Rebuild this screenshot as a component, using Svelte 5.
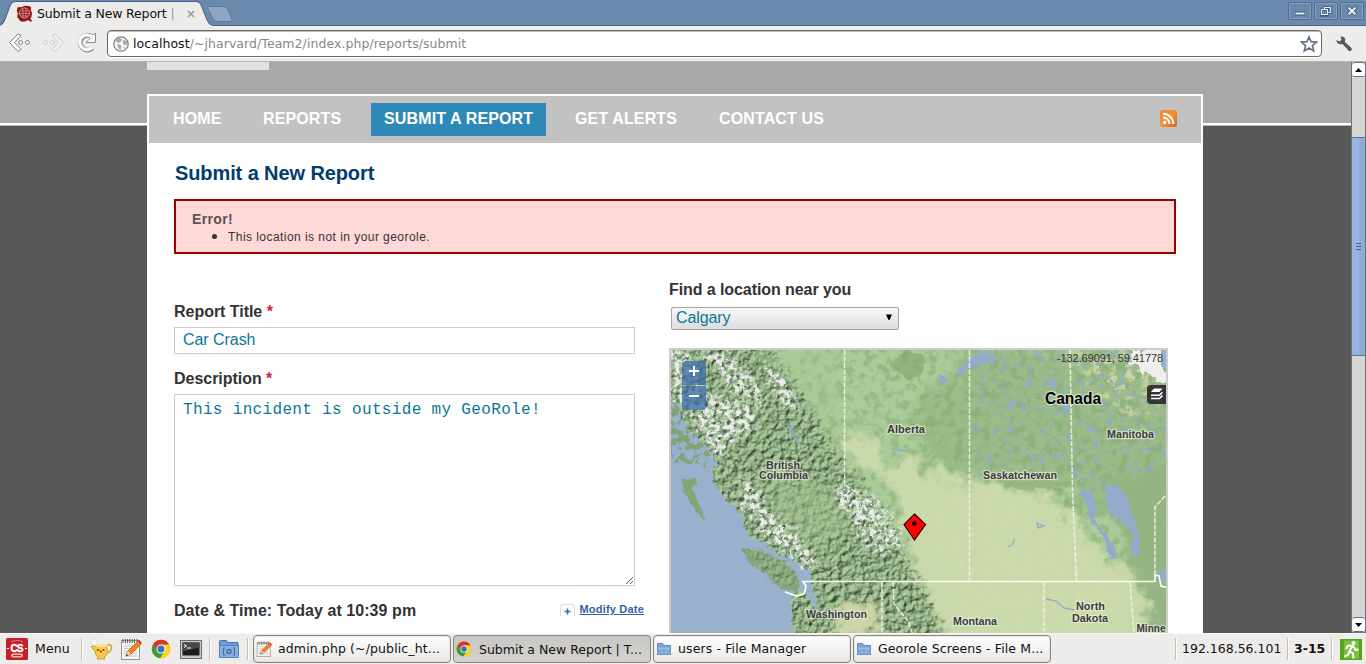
<script>
  const nav = [
    { label: 'HOME', w: 74 },
    { label: 'REPORTS', w: 105 },
    { label: 'SUBMIT A REPORT', w: 175, active: true },
    { label: 'GET ALERTS', w: 128 },
    { label: 'CONTACT US', w: 132 }
  ];
  const tasks = [
    { icon: 'note', label: 'admin.php (~/public_ht...' },
    { icon: 'chrome', label: 'Submit a New Report | T...', active: true },
    { icon: 'folder', label: 'users - File Manager' },
    { icon: 'folder', label: 'Georole Screens - File M...' }
  ];
  const labels = [
    ['Alberta', 887, 433, 38], ['British', 766, 469, 34], ['Columbia', 759, 479, 49],
    ['Manitoba', 1107, 438, 47], ['Saskatchewan', 983, 479, 74], ['Washington', 806, 618, 61],
    ['Montana', 953, 625, 44], ['North', 1076, 610, 29], ['Dakota', 1072, 621.5, 36], ['Minne', 1136.5, 632, 29]
  ];
  let title = $state('Car Crash');
  let description = $state('This incident is outside my GeoRole!');
</script>

{#snippet note(s)}
  <svg width={s} height={s} viewBox="0 0 22 22">
    <rect x="1.5" y="2.5" width="18" height="19" fill="#f4f4f2" stroke="#969692" />
    <path d="M3 1v4M5.300 1v4M7.600 1v4M9.900 1v4M12.200 1v4M14.500 1v4M17 1v4" stroke="#555" stroke-width="1" />
    <path d="M4 8h13M4 10.500h13M4 13h13M4 15.500h13M4 18h13" stroke="#bcbcbc" stroke-width=".8" />
    <path d="M6 18l2-5 10-10 3 3-10 10z" fill="#f58220" stroke="#b34d0c" stroke-width=".7" />
    <path d="M18 3l1-1 3 3-1 1z" fill="#d22" /><path d="M6 18l2-5 3 3z" fill="#f2d8a0" /><path d="M6 18l.8-2 1.200 1.200z" fill="#222" />
  </svg>
{/snippet}
{#snippet chrome(s)}
  <svg width={s} height={s} viewBox="0 0 20 20">
    <circle cx="10" cy="10" r="9.300" fill="#e8c21c" />
    <path d="M2 5.300A9.300 9.300 0 0 1 18.300 5.700H10L6 12z" fill="#d9352a" />
    <path d="M2 5.300A9.300 9.300 0 0 0 9.300 19.300L13.500 12.300 6 12z" fill="#3a9c3d" />
    <path d="M10 5.700h8.300A9.300 9.300 0 0 1 9.300 19.300L14 12z" fill="#f7d229" />
    <circle cx="10" cy="10" r="4.500" fill="#f4f6f8" /><circle cx="10" cy="10" r="3.400" fill="#2f72b8" />
  </svg>
{/snippet}
{#snippet folder(s)}
  <svg width={s} height={s} viewBox="0 0 16 16">
    <path d="M1.500 13.500v-11h5l1 2h7v9z" fill="#7aa3d6" stroke="#5f8bc2" />
    <path d="M1.500 6.500h13v7h-13z" fill="#86aedd" stroke="#6a96cd" /><path d="M2 7h12" stroke="#a9c8ec" />
  </svg>
{/snippet}

<div class="screen">
  <div class="titlebar">
    <div class="tab">
      <svg class="tabshape" width="236" height="26" viewBox="0 0 236 26">
        <path d="M0 25.500Q3.500 25 5.500 19L10 6Q11.500 2 15 2H196Q200 2 201.500 6L207 20Q209 25.500 213 25.500V26H0z" fill="#edecea" />
        <path d="M0 25Q3.500 24 5.500 18L10 6Q11.500 1.500 15 1.500H196Q200 1.500 201.500 6L207 20Q209 25 213 25.300" fill="none" stroke="#47617f" />
        <path d="M209 6.500H224Q227 6.500 228 9.500L232 19Q232.500 21.500 230 21.500H217Q214 21.500 212.500 18L208 9Q207 6.500 209 6.500z" fill="#8fa5c2" stroke="#5c789c" />
      </svg>
      <svg class="fav" width="18" height="18" viewBox="0 0 18 18">
        <path d="M2 2q3 1 6-1 4-1 7 1-1 3 1 6 0 4-2 6l2 1-1 2-3-2q-4 3-8 1l-1-2Q0 12 2 9 0 5 2 2z" fill="#8f1518" />
        <circle cx="8.500" cy="8" r="5" fill="none" stroke="#dba0a0" /><path d="M5 6h7M4 8.500h9M5 11h7M7 4v8M10 4v8" stroke="#d48e8e" stroke-width=".8" />
      </svg>
      <span class="tabtext">Submit a New Report <i>|</i></span>
      <svg class="tabx" width="8" height="8" viewBox="0 0 8 8"><path d="M1 1l6 6M7 1l-6 6" stroke="#9c9c9a" stroke-width="1.700" /></svg>
    </div>
    <div class="winbtns">
      <span><svg width="22" height="16" viewBox="0 0 22 16"><path d="M6 10.500h10" stroke="#3f5878" stroke-width="4" /><path d="M6.500 10.500h9" stroke="#e6edf5" stroke-width="2" /></svg></span>
      <span><svg width="22" height="16" viewBox="0 0 22 16"><path d="M6.500 6.500h6v6h-6zM9.500 6V4.500h6v5h-2" fill="none" stroke="#3f5878" stroke-width="2.600" /><path d="M6.500 6.500h6v5h-6zM9.500 6V4.500h6v5h-2" fill="none" stroke="#e6edf5" stroke-width="1.200" /></svg></span>
      <span><svg width="22" height="16" viewBox="0 0 22 16"><path d="M7 4l8 8M15 4l-8 8" stroke="#3f5878" stroke-width="3.600" /><path d="M7.500 4.500l7 7M14.500 4.500l-7 7" stroke="#e6edf5" stroke-width="2" /></svg></span>
    </div>
  </div>

  <div class="toolbar">
    <svg width="98" height="24" viewBox="0 0 98 24">
      <g fill="#fafaf9" stroke="#858583" stroke-width="1">
        <path d="M9.500 11.500L18 3l3.200 1.500-6.700 7 6.700 7-3.200 2z" />
        <circle cx="20.500" cy="11.500" r="2" /><circle cx="27.500" cy="11.500" r="2" />
      </g>
      <g fill="#f2f1ef" stroke="#cecdca"><path d="M63.500 11.500L55 3l-3.200 1.500 6.700 7-6.700 7 3.200 2z" /><circle cx="45.500" cy="11.500" r="2" /><circle cx="52.500" cy="11.500" r="2" /></g>
      <path d="M91.500 5.500A7.300 7.300 0 1 0 92.500 17" fill="none" stroke="#8c8c8a" stroke-width="5" />
      <path d="M95.500 2v9.500H86l3.500-3.500z" fill="#fafaf9" stroke="#8c8c8a" />
      <path d="M92 6A7.300 7.300 0 1 0 92 16.500" fill="none" stroke="#fafaf9" stroke-width="3.200" />
      <path d="M94.500 4v6.500H88l3-2.500-1-2.500z" fill="#fafaf9" />
    </svg>
    <div class="omnibox">
      <svg width="16" height="16" viewBox="0 0 16 16"><circle cx="8" cy="8" r="7.200" fill="#f6f6f6" stroke="#858585" stroke-width="1.300" /><path d="M3 3.500l3-1.500 3 1-1 2.500-2 1.500-3-1.500zM4 8l3 .500 1.500 2-1 3.500-2-1.500zM10 4l3.500 1 1 3-2 1.500-2.500-2zM10.500 11l2 .500-1.500 1.500z" fill="#a9a9a9" /></svg>
      <div class="url">localhost<span>/~jharvard/Team2/index.php/reports/submit</span></div>
      <svg width="18" height="18" viewBox="0 0 18 18"><path d="M9 1.800l2.100 4.900 5.400.400-4.100 3.500 1.300 5.300L9 13.100l-4.700 2.800 1.300-5.300L1.500 7.100l5.400-.400z" fill="#fff" stroke="#69748f" stroke-width="1.700" /></svg>
    </div>
    <svg class="wrench" width="18" height="18" viewBox="0 0 18 18"><path d="M5.500 1.500Q9.500 1 10.300 4.500L9.800 7l6.700 6q1 1.500-.500 2.800-1.300 1-2.500-.300L7.500 9Q4.500 10 2.500 8L1 5l3.500 1.500 2-1.500z" fill="#575755" /></svg>
  </div>

  <div class="view">
    <div class="page">
      <div class="stub"></div>
      <div class="container">
        <div class="nav">
          {#each nav as n}
            <a class:active={n.active} style="width:{n.w}px">{n.label}</a>
          {/each}
          <svg class="rss" width="17" height="17" viewBox="0 0 17 17">
            <defs><linearGradient id="rssg" x1="0" y1="0" x2="1" y2="1"><stop offset="0" stop-color="#ef8434" /><stop offset=".5" stop-color="#f49334" /><stop offset="1" stop-color="#dc5c22" /></linearGradient></defs>
            <rect width="17" height="17" rx="2.500" fill="url(#rssg)" /><circle cx="4.700" cy="12.500" r="1.700" fill="#fff" />
            <path d="M3 7.500a6.500 6.500 0 0 1 6.500 6.500M3 3.700A10.300 10.300 0 0 1 13.300 14" fill="none" stroke="#fff" stroke-width="2" />
          </svg>
        </div>
        <h1>Submit a New Report</h1>
        <div class="error">
          <h3>Error!</h3>
          <ul><li>This location is not in your georole.</li></ul>
        </div>
        <div class="cols">
          <div class="left">
            <h4>Report Title <b>*</b></h4>
            <input type="text" bind:value={title} />
            <h4 class="h2">Description <b>*</b></h4>
            <textarea spellcheck="false" bind:value={description}></textarea>
            <div class="daterow">
              <h4>Date &amp; Time: Today at 10:39 pm</h4>
              <span class="plus"><svg width="7" height="7" viewBox="0 0 7 7"><path d="M3.500 .5v6M.5 3.500h6" stroke="#2577a5" stroke-width="1.600" /></svg></span>
              <a>Modify Date</a>
            </div>
          </div>
          <div class="right">
            <h4>Find a location near you</h4>
            <div class="select"><span>Calgary</span><svg width="8" height="7" viewBox="0 0 8 7"><path d="M1 .5h6L4.500 6h-1z" fill="#000" /></svg></div>
            <div class="map">
              <svg width="495" height="285" viewBox="671 350 495 285" color-interpolation-filters="sRGB">
                <defs>
                  <filter id="relief" x="-5%" y="-5%" width="110%" height="110%">
                    <feTurbulence type="fractalNoise" baseFrequency=".17" numOctaves="3" seed="8" result="n" />
                    <feColorMatrix in="n" values="0 0 0 0 0  0 0 0 0 0  0 0 0 0 0  1 0 0 0 0" result="h" />
                    <feDiffuseLighting in="h" surfaceScale="2.700" diffuseConstant="1.140" lighting-color="#98b78b" result="lit"><feDistantLight azimuth="225" elevation="58" /></feDiffuseLighting>
                    <feGaussianBlur in="SourceAlpha" stdDeviation="3" result="b" />
                    <feDisplacementMap in="b" in2="n" scale="26" xChannelSelector="R" yChannelSelector="G" result="edge" />
                    <feComposite in="lit" in2="edge" operator="in" />
                  </filter>
                  <filter id="rough" x="-5%" y="-5%" width="110%" height="110%">
                    <feTurbulence type="fractalNoise" baseFrequency=".13" numOctaves="3" seed="3" />
                    <feDisplacementMap in="SourceGraphic" scale="14" xChannelSelector="R" yChannelSelector="G" />
                  </filter>
                  <filter id="nick" x="-10%" y="-10%" width="120%" height="120%">
                    <feTurbulence type="fractalNoise" baseFrequency=".2" numOctaves="3" seed="9" />
                    <feDisplacementMap in="SourceGraphic" scale="6" xChannelSelector="R" yChannelSelector="G" />
                  </filter>
                  <filter id="softrough" x="-10%" y="-10%" width="120%" height="120%">
                    <feTurbulence type="fractalNoise" baseFrequency=".06" numOctaves="4" seed="5" result="n" />
                    <feGaussianBlur in="SourceGraphic" stdDeviation="4" result="b" />
                    <feDisplacementMap in="b" in2="n" scale="38" xChannelSelector="R" yChannelSelector="G" />
                  </filter>
                  <filter id="snow" x="-5%" y="-5%" width="110%" height="110%">
                    <feTurbulence type="fractalNoise" baseFrequency=".2" numOctaves="4" seed="14" result="n" />
                    <feColorMatrix values="0 0 0 0 .92  0 0 0 0 .92  0 0 0 0 .92  7 0 0 0 -3.150" result="s" />
                    <feGaussianBlur in="SourceAlpha" stdDeviation="2" result="b" />
                    <feDisplacementMap in="b" in2="n" scale="20" xChannelSelector="G" yChannelSelector="B" result="edge" />
                    <feComposite in="s" in2="edge" operator="in" />
                  </filter>
                  <filter id="lakes" x="0" y="0" width="100%" height="100%">
                    <feTurbulence type="fractalNoise" baseFrequency=".15" numOctaves="5" seed="21" />
                    <feColorMatrix values="0 0 0 0 .57  0 0 0 0 .67  0 0 0 0 .76  8 0 0 0 -4.800" />
                    <feComposite operator="in" in2="SourceGraphic" />
                  </filter>
                  <filter id="islets" x="0" y="0" width="100%" height="100%">
                    <feTurbulence type="fractalNoise" baseFrequency=".14" numOctaves="3" seed="31" />
                    <feColorMatrix values="0 0 0 0 .51  0 0 0 0 .64  0 0 0 0 .46  12 0 0 0 -5.800" />
                    <feComposite operator="in" in2="SourceGraphic" />
                  </filter>
                  <filter id="mottle" x="0" y="0" width="100%" height="100%">
                    <feTurbulence type="fractalNoise" baseFrequency=".11" numOctaves="5" seed="12" />
                    <feColorMatrix values="0 0 0 0 .50  0 0 0 0 .64  0 0 0 0 .42  5 0 0 0 -2.400" />
                    <feComposite operator="in" in2="SourceGraphic" />
                  </filter>
                  <filter id="sand" x="0" y="0" width="100%" height="100%">
                    <feTurbulence type="fractalNoise" baseFrequency=".12" numOctaves="5" seed="17" />
                    <feColorMatrix values="0 0 0 0 .83  0 0 0 0 .86  0 0 0 0 .66  6 0 0 0 -3" result="s" />
                    <feGaussianBlur in="SourceAlpha" stdDeviation="6" result="b" />
                    <feComposite in="s" in2="b" operator="in" />
                  </filter>
                </defs>
                <rect x="671" y="350" width="495" height="285" fill="#abcb99" />
                <path d="M975 350H1180V500L1080 515 1060 490 990 480 930 470 910 410z" fill="#9bbc88" filter="url(#softrough)" />
                <path d="M889 365L905 350 925 355 922 375 908 380z" fill="#91b47f" filter="url(#nick)" />
                <rect x="800" y="350" width="366" height="285" fill="#fff" filter="url(#mottle)" opacity=".45" />
                <path d="M1112 480L1180 460V650H1145z" fill="#95b482" filter="url(#softrough)" />
                <path d="M838 432L872 440 885 470 910 462 960 480 1030 490 1055 500 1082 530 1110 560 1148 590V650H945L915 580 905 540 902 500 885 480 850 465z" fill="#cad9ab" filter="url(#softrough)" />
                <path d="M920 485H1055L1120 560V635H960z" fill="#fff" filter="url(#sand)" opacity=".5" />
                <path d="M985 476H1050L1055 486 1020 490z" fill="#98b684" filter="url(#nick)" />
                <path d="M660 340H765L800 390 834 450 864 485 893 525 906 560 926 595 950 650H780L786 594 800 580 745 535 711 480 665 400z" fill="#fff" filter="url(#relief)" />
                <path d="M760 480L830 480 845 530 815 550 785 530z" fill="#a2c28f" opacity=".55" filter="url(#softrough)" />
                <path d="M755 350H842V440L800 390z" fill="#a7c793" opacity=".35" filter="url(#softrough)" />
                <path d="M847 602L880 604 880 635H832L838 615z" fill="#cdd5a8" filter="url(#softrough)" />
                <path d="M1060 350H1160V410L1130 420 1100 400z" fill="#fff" filter="url(#sand)" opacity=".8" />
                <path d="M655 395L674 402 690 432 716 458 712 478 722 497 742 515 750 538 776 552 797 561 811 574 812 590 818 612 810 600 804 588 794 594 790 603 796 650H655z" fill="#9ab1cd" filter="url(#rough)" />
                <path d="M671 395L690 420 715 462 706 468 685 463H671z" fill="#fff" filter="url(#islets)" />
                <g filter="url(#nick)"><path d="M681 479L697 479 693 490 700 508 706 521 697 512 686 496zM741 547L762 551 782 561 796 573 800 587 794 592 780 588 765 573 749 562z" fill="#85a577" /></g>
                <path d="M745 549L762 553 782 563 794 575 797 585 780 585 765 571z" fill="#fff" filter="url(#relief)" opacity=".6" />
                <path d="M671 350L692 352 702 385 716 400 726 430 726 460 712 450 692 418 671 392zM698 350L730 354 764 394 760 408 732 388zM764 362L785 376 799 410 796 418 770 386zM716 398L750 404 758 430 726 442zM738 482L750 478 766 506 796 533 815 562 810 570 788 552 764 536 742 505zM834 492L850 487 882 502 908 550 900 552 872 528 840 508zM854 516L866 518 890 552 884 556 860 538z" fill="#fff" filter="url(#snow)" />
                <path d="M975 350H1166V470L1090 490 1060 470 970 465z" fill="#fff" filter="url(#lakes)" />
                <path d="M1132 350H1166V384L1154 378 1145 372 1130 362z" fill="#eeefed" filter="url(#rough)" />
                <path d="M1161 350h5v20l-5-4z" fill="#91b3d2" />
                <g fill="#94abc9" filter="url(#nick)">
                  <path d="M955 374L972 356 982 353 1000 357 992 362 970 367 960 376zM938 373L949 379 944 384 939 380zM1053 376L1058 386 1049 391zM1061 403L1069 405 1064 419zM1005 405L1018 400 1015 406 1008 408zM1105 486L1118 484 1128 498 1134 520 1140 540 1138 556 1132 557 1133 535 1120 520 1108 512zM1080 487L1093 493 1097 508 1094 520 1104 531 1118 552 1116 559 1110 557 1102 535 1090 520zM1028 455l8 1 2 4-6 1zM1158 570l8-1v13l-8-2z" />
                </g>
                <path d="M788 425l8 10 2 9-6-9zM892 449l16 2M1037 523l7 3-6 2zM1008 547q7-3 6-8M1046 599l10 2 8 7 10 2" fill="none" stroke="#93aac4" stroke-width="1.300" />
                <g fill="none" stroke="#f1f4e8" stroke-opacity=".9" stroke-width="1.500" stroke-dasharray="5 1.500">
                  <path d="M844.500 350V485L858 493M969.500 350V581M1070 350L1072.500 490 1076.500 581M1155 575V507L1166 495M882 582V635M893 582L894 604 908 621 913 635M1044 582V635M1130 582L1134 635" />
                </g>
                <path d="M858 493L880 520 898 545 917 580" stroke="#dde6cf" fill="none" stroke-dasharray="4 2" stroke-opacity=".7" />
                <path d="M785 592L797 596 804 594 806 586 803 581.500H1155V575L1159 576 1161 586 1166 587.500" fill="none" stroke="#fafcf5" stroke-width="1.700" />
                <g font-family="Liberation Sans, sans-serif" font-weight="bold" paint-order="stroke" stroke="#edf2e2" stroke-opacity=".65" stroke-width="2.500" stroke-linejoin="round" fill="#3c3c3c">
                  {#each labels as l}
                    <text x={l[1]} y={l[2]} font-size="11" textLength={l[3]} lengthAdjust="spacingAndGlyphs">{l[0]}</text>
                  {/each}
                  <text x="1045" y="403.500" font-size="16" textLength="56" lengthAdjust="spacingAndGlyphs" fill="#000">Canada</text>
                </g>
                <path d="M914.500 514L925.500 524.500 914.500 540 904 524.500z" fill="#f00" stroke="#2a0000" stroke-width="1.200" /><circle cx="914.500" cy="523.500" r="2.200" fill="#000" />
              </svg>
              <div class="zoomer"><span><svg width="10" height="10"><path d="M5 0v10M0 5h10" stroke="#fff" stroke-width="2" /></svg></span><span><svg width="10" height="10"><path d="M0 5h10" stroke="#fff" stroke-width="2" /></svg></span></div>
              <div class="coords">-132.69091, 59.41778</div>
              <div class="layers"><svg width="13" height="13" viewBox="0 0 13 13"><path d="M4 .5h8.500L9.500 4H1z" fill="#fff" /><path d="M1 7.200h8.500l3-3M1 10.500h8.500l3-3" fill="none" stroke="#fff" stroke-width="1.600" /></svg></div>
            </div>
          </div>
        </div>
      </div>
    </div>
    <div class="scroll">
      <div class="arrow"><svg width="7" height="4" viewBox="0 0 7 4"><path d="M3.500 0L7 4H0z" /></svg></div>
      <div class="track"><div class="thumb"><i></i><i></i><i></i></div></div>
      <div class="arrow"><svg width="7" height="4" viewBox="0 0 7 4"><path d="M0 0h7L3.500 4z" /></svg></div>
    </div>
  </div>

  <div class="taskbar">
    <svg class="cs" width="22" height="22" viewBox="0 0 22 22"><rect width="22" height="22" rx="1.500" fill="#c5202a" /><path d="M5 4q6-3 12 0" stroke="#f2c5c5" fill="none" stroke-dasharray="1 .7" /><text x="11" y="14" font-family="Liberation Sans, sans-serif" font-weight="bold" font-size="10" text-anchor="middle" fill="#fff" textLength="13" stroke="#fff" stroke-width=".4">CS</text><path d="M1 10.500h2M19 10.500h2" stroke="#fff" /><rect x="5" y="15.500" width="12" height="4" rx="2" fill="#f0bcbc" /><path d="M7 17.500h8" stroke="#c5202a" /></svg>
    <span class="menu">Menu</span>
    <i class="sep"></i>
    <svg class="i1" width="23" height="22" viewBox="0 0 23 22"><circle cx="4" cy="4" r="3" fill="#fafafa" stroke="#ccc" stroke-width=".6" /><path d="M3 8l4 1q4-4 9-1l1 2q2 7-3 9l1 2H7l1-2q-3-2-3-6L1 9z" fill="#f0cc48" stroke="#b98a1c" stroke-width=".7" /><path d="M17 7q5-1 4.500 3-.5 4-4.500 5" fill="none" stroke="#d9ae2c" stroke-width="1.700" /><path d="M7 6h8l1 3H6z" fill="#f9e68c" /><circle cx="8" cy="12" r="1.100" fill="#c22" /><circle cx="13.500" cy="12" r="1.100" fill="#c22" /><circle cx="10.800" cy="13.500" r="1.100" fill="#c22" /></svg>
    <span class="i2">{@render note(22)}</span>
    <span class="i3">{@render chrome(20)}</span>
    <svg class="i4" width="22" height="19" viewBox="0 0 22 19"><rect x=".5" y=".5" width="21" height="18" fill="#c9cac6" stroke="#6c6d69" /><rect x="2.500" y="2.500" width="17" height="13" fill="#1b1d1d" /><path d="M2.500 2.500h17v5l-17 4z" fill="#454848" /><path d="M4 4.500l2.500 1.500L4 7.500M7 8h4" stroke="#fff" fill="none" /></svg>
    <i class="sep s2"></i>
    <svg class="i5" width="22" height="20" viewBox="0 0 22 20"><path d="M1.500 18.500V2.500q0-1 1-1h6l1.500 2h10v15z" fill="#6d9bd0" stroke="#4174b0" /><path d="M1.500 6.500h19v11q0 1-1 1h-17q-1 0-1-1z" fill="#85aedd" stroke="#4f82bf" /><path d="M7 9H5.500v7H7M15 9h1.500v7H15" fill="none" stroke="#3a6cab" /><circle cx="11" cy="12.500" r="2" fill="none" stroke="#3a6cab" stroke-width="1.300" /></svg>
    <i class="sep s3"></i>
    <div class="tasks">
      {#each tasks as t}
        <div class="task" class:on={t.active}>
          {#if t.icon === 'note'}{@render note(16)}{:else if t.icon === 'chrome'}{@render chrome(16)}{:else}{@render folder(16)}{/if}
          <span>{t.label}</span>
        </div>
      {/each}
    </div>
    <i class="sep s4"></i>
    <span class="ip">192.168.56.101</span>
    <i class="sep s5"></i>
    <span class="clock">3-15</span>
    <i class="sep s6"></i>
    <svg class="exit" width="22" height="21" viewBox="0 0 22 21"><rect width="22" height="21" fill="#55a51c" /><rect x="4" y="1.500" width="15" height="18" fill="#7cc043" /><circle cx="13.500" cy="4" r="2" fill="#fff" /><path d="M12.500 6.500l-3 5.500 3.500 2.500.5 5M9.500 12.500L8 16l-4 1.500M6 10l2-3.500 5 .500 2.500 4 3-.500" fill="none" stroke="#fff" stroke-width="2" /></svg>
  </div>
</div>

<style>
  :global(body) { margin: 0; overflow: hidden; }
  .screen, .screen * { box-sizing: border-box; }
  .screen { width: 1366px; height: 664px; display: flex; flex-direction: column; overflow: hidden; font-family: "DejaVu Sans", sans-serif; font-size: 12.5px; color: #111; background: #fff; }
  svg { display: block; flex: none; }
  h1, h3, h4, ul { margin: 0; padding: 0; }
  .titlebar { height: 26px; flex: none; background: #6b89ad; border-bottom: 1px solid #4c6583; display: flex; justify-content: space-between; }
  .tab { position: relative; width: 236px; height: 26px; display: flex; align-items: center; padding-left: 16px; z-index: 1; }
  .tabshape { position: absolute; left: 0; top: 0; }
  .fav { position: relative; top: 1px; }
  .tabtext { position: relative; width: 138px; margin-left: 3px; white-space: nowrap; letter-spacing: -.16px; }
  .tabtext i { font-style: normal; color: #999; }
  .tabx { position: relative; margin-left: 12px; top: 1px; }
  .winbtns { display: flex; gap: 2px; padding: 2px 2px 0 0; }
  .winbtns span { width: 24px; height: 18px; border: 1px solid #4f6c90; border-radius: 2px; box-shadow: inset 0 0 0 1px #86a0c0; }
  .toolbar { height: 36px; flex: none; background: #edecea; border-bottom: 1px solid #b3b2ae; display: flex; align-items: flex-start; padding-top: 4px; }
  .toolbar > svg:first-child { margin-top: 1px; }
  .omnibox { margin-left: 9px; width: 1215px; height: 27px; border: 1px solid #6b6965; border-radius: 4px; background: #fff; display: flex; align-items: center; padding: 0 3px 0 5px; box-shadow: inset 0 1px 0 #bbb, 0 1px 0 #fff; }
  .url { flex: 1; margin-left: 4px; color: #111; letter-spacing: .06px; }
  .url span { color: #888; }
  .wrench { margin: 5px 0 0 13px; }
  .view { height: 571px; flex: none; display: flex; overflow: hidden; }
  .page { width: 1351px; height: 571px; overflow: hidden; background: linear-gradient(#a8a8a8 61px, #fff 61px, #fff 63px, #b9b9b9 63px, #b9b9b9 64px, #585858 64px); font-family: "Liberation Sans", sans-serif; padding-left: 147px; }
  .stub { width: 122px; height: 8px; background: #e2e2e2; }
  .container { margin-top: 24px; width: 1056px; height: 600px; background: #fff; padding: 2px; }
  .nav { height: 47px; background: #c2c2c2; display: flex; align-items: flex-start; padding: 7px 0 0 11px; }
  .nav a { height: 33px; line-height: 32px; font-weight: bold; font-size: 16px; color: #fff; padding-left: 13px; white-space: nowrap; letter-spacing: .13px; }
  .nav a + a { margin-left: 16px; }
  .nav a.active { background: #2f89b8; }
  .rss { margin: 7px 24px 0 auto; }
  h1 { font-size: 20px; line-height: 24px; color: #003c71; margin: 18px 0 0 26px; letter-spacing: -.1px; }
  .error { margin: 14px 0 0 25px; width: 1002px; height: 55px; border: 2px solid #990000; background: #ffd8d8; padding: 10px 16px; }
  .error h3 { font-size: 14px; line-height: 16px; color: #555; letter-spacing: .35px; }
  .error ul { font-size: 12px; line-height: 18px; margin-left: 36px; color: #333; letter-spacing: .45px; }
  .error li::marker { font-size: 15px; }
  .cols { display: flex; }
  .left { width: 495px; padding: 48px 0 0 25px; }
  h4 { font-size: 16px; line-height: 20px; color: #333; white-space: nowrap; letter-spacing: -.03px; }
  h4 b { color: #cf2340; }
  input, textarea { display: block; width: 461px; border: 1px solid #ccc; margin: 0; padding: 0 8px 2px; color: #0c7898; outline: 0; background: #fff; border-radius: 0; }
  input { height: 27px; margin-top: 5px; font: 16px "Liberation Sans", sans-serif; letter-spacing: -.05px; }
  .h2 { margin-top: 15px; }
  textarea { height: 192px; margin-top: 5px; padding-top: 6px; font: 16px/18px "Liberation Mono", monospace; letter-spacing: .34px; }
  .daterow { display: flex; align-items: center; margin-top: 15px; width: 470px; }
  .daterow h4 { flex: 1; letter-spacing: .06px; }
  .daterow a { color: #3761a8; font-weight: bold; font-size: 11px; text-decoration: underline; letter-spacing: .2px; margin-left: 4px; position: relative; top: -2px; }
  .plus { width: 15px; height: 12px; border: 1px solid #ddd; border-bottom: 0; border-radius: 4px 4px 0 0; display: flex; align-items: flex-end; justify-content: center; padding-bottom: 1px; position: relative; top: -1px; }
  .right { width: 500px; margin-left: 25px; padding-top: 26px; }
  .right h4 { letter-spacing: -.08px; }
  .select { width: 228px; height: 23px; margin: 7px 0 0 2px; border: 1px solid #a6a6a6; border-radius: 2px; background: linear-gradient(#f8f8f8, #ddd); display: flex; align-items: center; justify-content: space-between; padding: 0 5px 2px 4px; color: #0c7898; font-size: 16px; letter-spacing: -.1px; }
  .map { position: relative; width: 499px; height: 290px; margin-top: 18px; border: 2px solid #ccc; overflow: hidden; }
  .zoomer { position: absolute; left: 11px; top: 11px; width: 24px; display: grid; gap: 1px; border-radius: 4px; overflow: hidden; }
  .zoomer span { height: 24px; background: rgba(58, 106, 166, .76); display: flex; align-items: center; justify-content: center; padding-bottom: 4px; }
  .coords { position: absolute; right: 3px; top: 1px; font-size: 11px; line-height: 14px; color: #333; letter-spacing: -.08px; }
  .layers { position: absolute; right: 0; top: 35px; width: 19px; height: 19px; background: #343434; border-radius: 4px 0 0 4px; padding: 3px 0 0 3px; }
  .scroll { width: 15px; display: flex; flex-direction: column; border: 1px solid #68717c; border-top: 0; background: #d7d6d3; }
  .arrow { height: 15px; background: #fff; border: solid #68717c; border-width: 1px 0; border-radius: 3px; display: flex; align-items: center; justify-content: center; }
  .track { flex: 1; padding-top: 60px; }
  .thumb { height: 219px; background: linear-gradient(90deg, #97b7e2 55%, #8dadd9 55%); border: solid #56759e; border-width: 1px 0; display: flex; flex-direction: column; align-items: center; justify-content: center; gap: 2px; }
  .thumb i { width: 5px; height: 1px; background: #4d5f78; }
  .taskbar { height: 31px; flex: 1; background: #edecea; border-top: 1px solid #f8f8f7; display: flex; align-items: center; }
  .cs { margin-left: 6px; }
  .menu { margin-left: 7px; width: 38px; position: relative; top: -1px; letter-spacing: .15px; }
  .sep { width: 2px; height: 22px; border-left: 1px solid #c0bfbc; background: #fff; margin-left: 8px; }
  .i1 { margin-left: 7px; } .i2 { margin-left: 7px; } .i3 { margin-left: 9px; } .i4 { margin-left: 9px; } .i5 { margin-left: 7px; }
  .s2 { margin-left: 7px; } .s3 { margin-left: 7px; }
  .tasks { display: flex; gap: 2px; margin-left: 4px; }
  .task { width: 198px; height: 28px; border: 1px solid #8a8781; border-radius: 4px; background: linear-gradient(#fff, #e9e8e6); display: flex; align-items: center; padding-left: 2px; gap: 6px; white-space: nowrap; box-shadow: inset 0 0 0 1px #c4c2be55; letter-spacing: .12px; }
  .task span { position: relative; top: -1px; }
  .task.on { background: linear-gradient(#c9c7c4, #d5d3d0); letter-spacing: 0; }
  .task.on span { top: 0; left: 1px; }
  .s4 { margin-left: auto; }
  .ip { margin-left: 6px; width: 98px; position: relative; top: -1px; left: -1px; } .s5 { margin-left: 6px; }
  .clock { font-weight: bold; width: 32px; margin-left: 5px; position: relative; top: -1px; } .s6 { margin-left: 5px; }
  .exit { margin: 0 4px 0 7px; }
</style>
